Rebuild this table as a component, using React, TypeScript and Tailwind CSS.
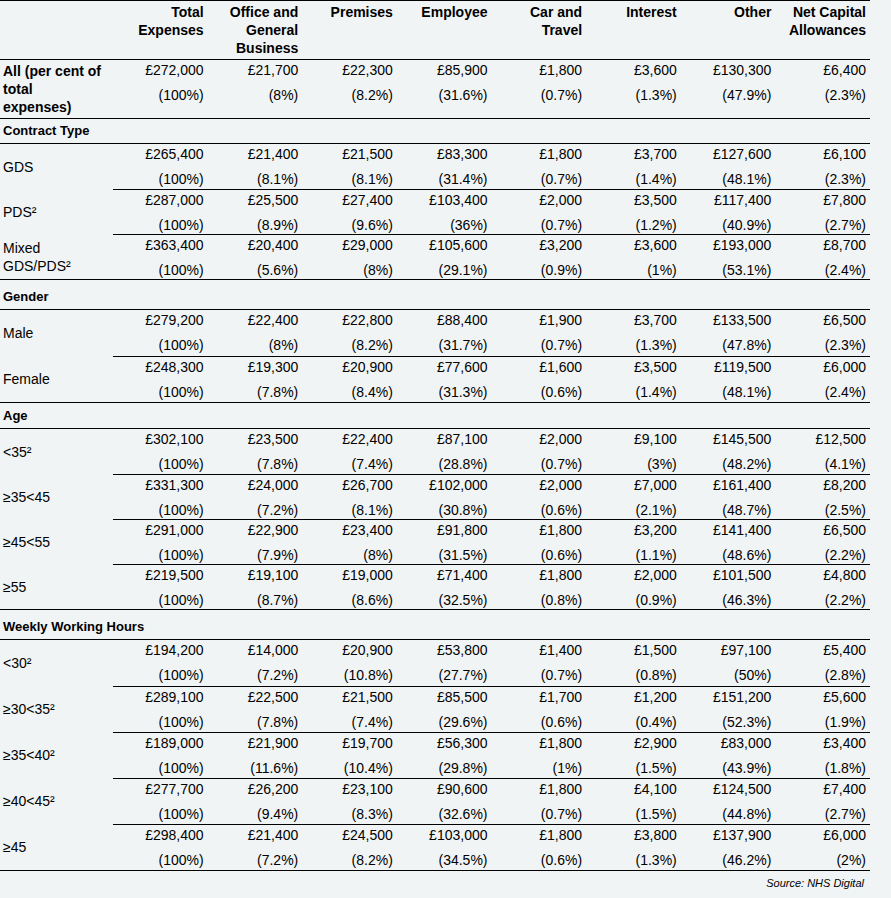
import React from "react";

type Row = { label: React.ReactNode; values: string[]; pcts: string[] };

const mk = (label: React.ReactNode, v: string, p: string): Row => ({
  label,
  values: v.split(" "),
  pcts: p.split(" "),
});

const headers: React.ReactNode[] = [
  <>Total<br />Expenses</>,
  <>Office and<br />General<br />Business</>,
  "Premises",
  "Employee",
  <>Car and<br />Travel</>,
  "Interest",
  "Other",
  <>Net Capital<br />Allowances</>,
];

const all = mk(
  "",
  "272,000 21,700 22,300 85,900 1,800 3,600 130,300 6,400",
  "100 8 8.2 31.6 0.7 1.3 47.9 2.3"
);

const sections: { title: string; h: string; rows: Row[]; rowH: string }[] = [
  {
    title: "Contract Type",
    h: "h-[25px]",
    rowH: "h-[45px]",
    rows: [
      mk("GDS", "265,400 21,400 21,500 83,300 1,800 3,700 127,600 6,100", "100 8.1 8.1 31.4 0.7 1.4 48.1 2.3"),
      mk("PDS²", "287,000 25,500 27,400 103,400 2,000 3,500 117,400 7,800", "100 8.9 9.6 36 0.7 1.2 40.9 2.7"),
      mk(<>Mixed<br />GDS/PDS²</>, "363,400 20,400 29,000 105,600 3,200 3,600 193,000 8,700", "100 5.6 8 29.1 0.9 1 53.1 2.4"),
    ],
  },
  {
    title: "Gender",
    h: "h-[30px]",
    rowH: "h-[46px]",
    rows: [
      mk("Male", "279,200 22,400 22,800 88,400 1,900 3,700 133,500 6,500", "100 8 8.2 31.7 0.7 1.3 47.8 2.3"),
      mk("Female", "248,300 19,300 20,900 77,600 1,600 3,500 119,500 6,000", "100 7.8 8.4 31.3 0.6 1.4 48.1 2.4"),
    ],
  },
  {
    title: "Age",
    h: "h-[26px]",
    rowH: "h-[45px]",
    rows: [
      mk("<35²", "302,100 23,500 22,400 87,100 2,000 9,100 145,500 12,500", "100 7.8 7.4 28.8 0.7 3 48.2 4.1"),
      mk("≥35<45", "331,300 24,000 26,700 102,000 2,000 7,000 161,400 8,200", "100 7.2 8.1 30.8 0.6 2.1 48.7 2.5"),
      mk("≥45<55", "291,000 22,900 23,400 91,800 1,800 3,200 141,400 6,500", "100 7.9 8 31.5 0.6 1.1 48.6 2.2"),
      mk("≥55", "219,500 19,100 19,000 71,400 1,800 2,000 101,500 4,800", "100 8.7 8.6 32.5 0.8 0.9 46.3 2.2"),
    ],
  },
  {
    title: "Weekly Working Hours",
    h: "h-[30px]",
    rowH: "h-[46px]",
    rows: [
      mk("<30²", "194,200 14,000 20,900 53,800 1,400 1,500 97,100 5,400", "100 7.2 10.8 27.7 0.7 0.8 50 2.8"),
      mk("≥30<35²", "289,100 22,500 21,500 85,500 1,700 1,200 151,200 5,600", "100 7.8 7.4 29.6 0.6 0.4 52.3 1.9"),
      mk("≥35<40²", "189,000 21,900 19,700 56,300 1,800 2,900 83,000 3,400", "100 11.6 10.4 29.8 1 1.5 43.9 1.8"),
      mk("≥40<45²", "277,700 26,200 23,100 90,600 1,800 4,100 124,500 7,400", "100 9.4 8.3 32.6 0.7 1.5 44.8 2.7"),
      mk("≥45", "298,400 21,400 24,500 103,000 1,800 3,800 137,900 6,000", "100 7.2 8.2 34.5 0.6 1.3 46.2 2"),
    ],
  },
];

function Values({ row }: { row: Row }) {
  return (
    <div className="grid grid-cols-8 h-full">
      {row.values.map((v, i) => (
        <div key={i} className="flex flex-col gap-[5px] items-end pr-[4px]">
          <span className="leading-[20px]">£{v}</span>
          <span className="leading-[20px]">({row.pcts[i]}%)</span>
        </div>
      ))}
    </div>
  );
}

export default function App() {
  return (
    <div
      className="min-h-[898px] w-full bg-[#f0f4f5] text-black text-[14px]"
      style={{ fontFamily: '"Liberation Sans", Arial, sans-serif' }}
    >
      <div className="w-[870px]">
        {/* header */}
        <div className="grid grid-cols-[113px_1fr] h-[60px] border-t border-b border-black font-bold leading-[18px] pt-[2px]">
          <div />
          <div className="grid grid-cols-8">
            {headers.map((h, i) => (
              <div key={i} className="text-right pr-[4px]">
                {h}
              </div>
            ))}
          </div>
        </div>

        {/* all row */}
        <div className="grid grid-cols-[113px_1fr] h-[59px] border-b border-black">
          <div className="font-bold leading-[18px] pl-[3px] pt-[2px]">
            All (per cent of
            <br />
            total
            <br />
            expenses)
          </div>
          <Values row={all} />
        </div>

        {sections.map((s) => (
          <div key={s.title} className="border-b border-black">
            <div
              className={`${s.h} flex items-end pl-[3px] pb-[4px] font-bold text-[13px] leading-[16px] border-b border-black`}
            >
              {s.title}
            </div>
            {s.rows.map((r, i) => (
              <div key={i} className={`grid grid-cols-[113px_1fr] ${s.rowH}`}>
                <div className="flex items-center pl-[3px] leading-[18px]">
                  <span>{r.label}</span>
                </div>
                <div className={i > 0 ? "border-t border-black" : ""}>
                  <Values row={r} />
                </div>
              </div>
            ))}
          </div>
        ))}

        <div className="text-right pr-[6px] pt-[4px] italic text-[11px]">
          Source: NHS Digital
        </div>
      </div>
    </div>
  );
}
